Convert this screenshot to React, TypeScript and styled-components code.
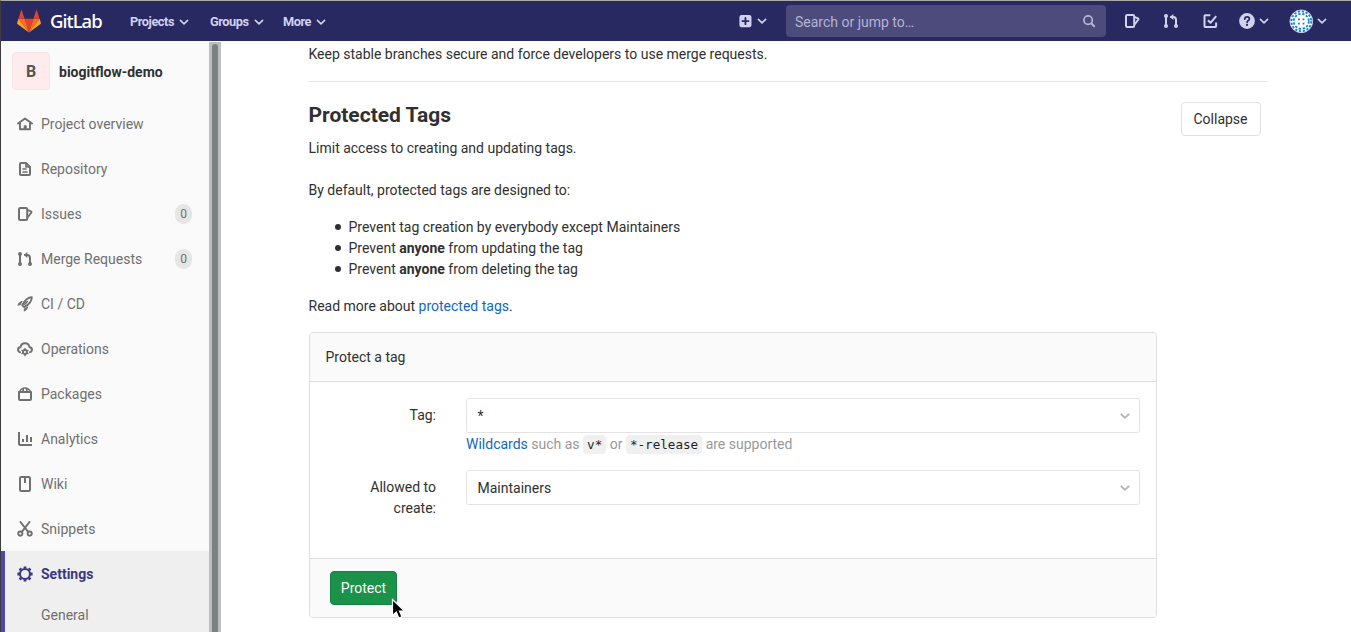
import React from "react";
import styled, { createGlobalStyle } from "styled-components";

const GlobalStyle = createGlobalStyle`
  * { box-sizing: border-box; }
  html, body { margin: 0; padding: 0; height: 632px; overflow: hidden; }
  body { background: #fff; color: #303030; font: 14px/21px Roboto, "Noto Sans", sans-serif; }
  p, h1, h4, ul { margin: 0; padding: 0; }
  svg { display: block; flex: none; }
`;

const Window = styled.div`
  width: 1351px;
  height: 632px;
  display: flex;
  flex-direction: column;
  overflow: hidden;
  border-top: 1px solid #a9aaa8;
  border-left: 1px solid #3c3b3f;
`;

const Navbar = styled.header`
  flex: none;
  height: 40px;
  display: flex;
  align-items: center;
  background: #292961;
  color: #d1d1f0;
  padding-left: 16px;
`;

const Brand = styled.a`
  display: flex;
  align-items: center;
  width: 113px;
  color: #fff;
`;

const Wordmark = styled.span`
  margin-left: 9px;
  font: 500 18.5px/24px "Noto Sans", "Open Sans", sans-serif;
  letter-spacing: -0.95px;
`;

const NavLink = styled.a<{ $width: number }>`
  display: flex;
  align-items: center;
  gap: 5px;
  width: ${(p) => p.$width}px;
  padding-top: 1px;
  font-weight: 700;
  font-size: 12.75px;
  letter-spacing: -0.45px;
`;

const NavSpacer = styled.div`
  flex: 1;
`;

const NavTool = styled.a<{ $width: number; $gap?: number }>`
  flex: none;
  display: flex;
  align-items: center;
  gap: ${(p) => p.$gap ?? 0}px;
  width: ${(p) => p.$width}px;
`;

const Search = styled.div`
  width: 320px;
  height: 32px;
  margin-right: 18px;
  padding: 0 10px 0 9px;
  display: flex;
  align-items: center;
  justify-content: space-between;
  border-radius: 4px;
  background: #4c4b7c;
  color: #b4b4d6;
`;

const SearchText = styled.span`
  padding-top: 2px;
`;

const Body = styled.div`
  flex: 1;
  min-height: 0;
  display: flex;
`;

const Sidebar = styled.nav`
  flex: none;
  width: 208px;
  background: #fafafa;
  color: #707070;
  overflow: hidden;
`;

const Scrollbar = styled.div`
  flex: none;
  width: 12px;
  margin-top: 1px;
  padding: 2px 3px 0;
  background: #bcbfbe;
`;

const Thumb = styled.div`
  height: 620px;
  border-radius: 3px;
  background: #7b8180;
`;

const Project = styled.div`
  height: 60px;
  padding: 0 0 0 11px;
  display: flex;
  align-items: center;
  gap: 9px;
  color: #303030;
  font-weight: 700;
`;

const ProjectAvatar = styled.span`
  width: 38px;
  height: 38px;
  display: flex;
  align-items: center;
  justify-content: center;
  border-radius: 4px;
  border: 1px solid #f8e6e7;
  background: #ffebee;
  color: #555;
  font-size: 16px;
`;

const ProjectName = styled.span`
  padding-top: 2px;
`;

const SideItem = styled.a<{ $active?: boolean }>`
  height: 45px;
  padding: 1px 17px 0 16px;
  display: flex;
  align-items: center;
  gap: 8px;
  font-weight: ${(p) => (p.$active ? 700 : 400)};
  color: ${(p) => (p.$active ? "#393982" : "inherit")};
`;

const SideLabel = styled.span`
  flex: 1;
`;

const Count = styled.span`
  width: 17px;
  height: 20px;
  border-radius: 9px;
  background: #e6e6e6;
  text-align: center;
  font-size: 12px;
  line-height: 20px;
`;

const ActiveGroup = styled.div`
  height: 90px;
  background: #efefef;
  box-shadow: inset 4px 0 0 #4b4ba3;
`;

const SubItem = styled.a`
  display: block;
  padding: 9px 0 0 40px;
`;

const Main = styled.main`
  flex: 1;
  padding: 3px 84px 0 87.5px;
`;

const Intro = styled.p`
  height: 38px;
  border-bottom: 1px solid #e1e1e1;
`;

const SectionHead = styled.div`
  height: 93px;
  padding: 20px 6px 0 0;
  display: flex;
  justify-content: space-between;
  align-items: flex-start;
`;

const Title = styled.h4`
  margin-bottom: 10px;
  font-size: 21px;
  line-height: 26px;
  font-weight: 700;
`;

const Button = styled.button<{ $primary?: boolean }>`
  width: ${(p) => (p.$primary ? 67 : 80)}px;
  height: 34px;
  padding: ${(p) => (p.$primary ? "0" : "0 1px 0 0")};
  border-radius: 4px;
  border: 1px solid ${(p) => (p.$primary ? "#168044" : "#e1e1e1")};
  background: ${(p) => (p.$primary ? "#1a9249" : "#fff")};
  color: ${(p) => (p.$primary ? "#fff" : "#303030")};
  font: inherit;
`;

const Paragraph = styled.p`
  margin: 5px 0 16px;
`;

const Bullets = styled.ul`
  margin-bottom: 16px;
  list-style: none;
`;

const Bullet = styled.li`
  display: flex;
  align-items: center;
  padding-left: 26.5px;

  &::before {
    content: "";
    width: 6px;
    height: 6px;
    margin: 0 7.5px 1px 0;
    border-radius: 50%;
    background: #303030;
  }
`;

const Link = styled.a`
  color: #1068bf;
`;

const Card = styled.form`
  width: 848px;
  height: 286px;
  margin: 15px 0 0 0.5px;
  display: flex;
  flex-direction: column;
  border: 1px solid #dedede;
  border-radius: 4px;
  overflow: hidden;
`;

const CardHeader = styled.div`
  height: 49px;
  padding: 14px 15.5px;
  background: #fafafa;
  border-bottom: 1px solid #dedede;
`;

const CardBody = styled.div`
  flex: 1;
  padding: 16px 16px 0 0;
`;

const CardFooter = styled.div`
  height: 59px;
  padding: 12px 20px;
  background: #fafafa;
  border-top: 1px solid #dedede;
`;

const FormRow = styled.div`
  display: grid;
  grid-template-columns: 126px 674px;
  column-gap: 30px;
  height: 72px;
`;

const Label = styled.label`
  padding: 7px 0 0 30px;
  text-align: right;
`;

const Select = styled.div`
  height: 35px;
  padding: 0 9px 0 10.5px;
  display: flex;
  align-items: center;
  justify-content: space-between;
  border: 1px solid #e3e3e3;
  border-radius: 3px;
  color: #303030;
`;

const SelectValue = styled.span`
  padding-top: 2px;
`;

const Hint = styled.p`
  padding-top: 1px;
  color: #999;
  white-space: nowrap;
`;

const Code = styled.code`
  padding: 2px 4px;
  border-radius: 4px;
  background: #f0f0f0;
  color: #1f1f1f;
  font: 12.6px/15px "DejaVu Sans Mono", monospace;
`;

const Pointer = styled.svg`
  position: absolute;
  left: 391px;
  top: 598px;
`;

const Chevron = ({ size = 10, color = "currentColor", width = 1.6 }) => (
  <svg width={size} height={size} viewBox="0 0 10 10" fill="none" stroke={color} strokeWidth={width} strokeLinecap="round" strokeLinejoin="round">
    <path d="M1.4 3.4 5 6.8l3.6-3.4" />
  </svg>
);

type IconName =
  | "home" | "doc" | "issues" | "merge" | "rocket" | "cloud" | "package"
  | "chart" | "book" | "scissors" | "gear" | "plus" | "todo" | "help" | "search";

const shapes: Record<IconName, React.ReactNode> = {
  home: <path d="M1 7.4 8 2.4l7 5M3 7v6.2h10V7M7.6 13V10.2h1.2V13" strokeWidth="1.9" />,
  doc: (
    <>
      <path d="M4 2h5l4 4v7a1 1 0 0 1-1 1H4a1 1 0 0 1-1-1V3a1 1 0 0 1 1-1Z" />
      <path d="M6 8H9M6 11h4M9 2.5V6h3.5" strokeWidth="1.7" />
    </>
  ),
  issues: (
    <>
      <rect x="2" y="2" width="8.2" height="12" rx="1.2" />
      <path d="M11 4.2l3 1.2c.5.2.6.6.4 1L11 11" strokeWidth="1.9" />
    </>
  ),
  merge: (
    <>
      <path d="M3 3v10M8 4h2.2C12 4 13 5 13 6.8V13" />
      <path d="M10.4.9v6.2L6.8 4Z" fill="currentColor" stroke="none" />
      <g fill="currentColor" stroke="none">
        <circle cx="3" cy="3" r="2" /><circle cx="3" cy="13" r="2" /><circle cx="13" cy="13" r="2" />
      </g>
    </>
  ),
  rocket: (
    <>
      <path d="M14.8 1.2C10.5 1.2 8 3.7 5.2 9.2l1.9 1.9c5.1-2.6 7.7-5.5 7.7-9.9Z" strokeWidth="1.9" />
      <path d="M10.3 5.6 7.7 8.3" strokeWidth="1.6" />
      <path d="M4.7 5C2.5 5.6 1 7.2.3 9.7l3-.5L5.8 5ZM6.8 12.7l4.4-2.4c-.2 2.3-1.8 4.5-4.4 5.4Z" fill="currentColor" stroke="none" />
    </>
  ),
  cloud: (
    <>
      <path d="M3 11.2C1.7 10.8 1 10 1 8.8c0-1.6 1.1-2.5 2.5-2.6C3.9 3.8 5.7 2.3 8 2.3s4.1 1.5 4.5 3.9c1.4.1 2.5 1 2.5 2.6 0 1.2-.7 2-2 2.4" />
      <circle cx="8" cy="11" r="2" strokeWidth="1.8" />
      <path d="M8 7.4v1.4M8 13.2v1.6M5 9.3l1.2.7M9.8 12l1.2.7M5 12.7l1.2-.7M9.8 10l1.2-.7" strokeWidth="1.4" />
    </>
  ),
  package: (
    <>
      <path d="M2 6h12v7a1 1 0 0 1-1 1H3a1 1 0 0 1-1-1Z" />
      <path d="M2.5 6C3.8 2.8 5 2 8 2s4.2.8 5.5 4M6.2 2.3v3.2M9.8 2.3v3.2" strokeWidth="1.7" />
    </>
  ),
  chart: <path d="M2 1v11.5c0 1 .5 1.5 1.5 1.5H15M6 8v3M10 4v7M14 6v5" strokeWidth="2" strokeLinecap="butt" />,
  book: (
    <>
      <rect x="3" y="1" width="10" height="14" rx="1.3" />
      <path d="M8 2v5" strokeWidth="2" strokeLinecap="butt" />
    </>
  ),
  scissors: (
    <>
      <circle cx="3.3" cy="12.6" r="2.1" strokeWidth="1.9" />
      <circle cx="12.7" cy="12.6" r="2.1" strokeWidth="1.9" />
      <path d="M3.5 1l7.7 9.8M12.5 1l-7.7 9.8" />
    </>
  ),
  gear: (
    <>
      <circle cx="8" cy="8" r="5" strokeWidth="2.1" />
      <path d="M8 .4v2.1M8 13.5v2.1M.4 8h2.1M13.5 8h2.1M2.6 2.6l1.5 1.5M11.9 11.9l1.5 1.5M2.6 13.4l1.5-1.5M11.9 4.1l1.5-1.5" strokeWidth="2.8" strokeLinecap="butt" />
    </>
  ),
  plus: (
    <>
      <rect x="1.6" y="1.2" width="13.8" height="13.8" rx="2.5" fill="currentColor" stroke="none" />
      <path d="M8.5 4.6v7M5 8.1h7" stroke="#292961" strokeWidth="2.1" />
    </>
  ),
  todo: <path d="M7.3 2.3H2.3c-.5 0-.8.3-.8.8v10.1c0 .5.3.8.8.8h10c.5 0 .8-.3.8-.8V9.4M4.9 7.2l2.6 2.6 5.7-6.6" strokeLinecap="butt" />,
  help: (
    <>
      <circle cx="8" cy="8" r="7.9" fill="currentColor" stroke="none" />
      <path d="M5.8 6.1c0-1.4.9-2.2 2.3-2.2s2.3.8 2.3 2c0 1.6-2.3 1.7-2.3 3.4" stroke="#292961" strokeWidth="1.7" />
      <circle cx="8" cy="11.9" r="1.1" fill="#292961" stroke="none" />
    </>
  ),
  search: (
    <>
      <circle cx="7" cy="7" r="4.8" />
      <path d="m10.8 10.8 3.1 3.1" strokeWidth="2.4" />
    </>
  ),
};

const Icon = ({ name, size = 16 }: { name: IconName; size?: number }) => (
  <svg width={size} height={size} viewBox="0 0 16 16" fill="none" stroke="currentColor" strokeWidth="2" strokeLinecap="round" strokeLinejoin="round">
    {shapes[name]}
  </svg>
);

const Tanuki = () => (
  <svg width="24" height="23" viewBox="0 0 24 23">
    <path d="M12 22.4 16.4 8.8H7.6Z" fill="#e24329" />
    <path d="M12 22.4 7.6 8.8H1.4Z" fill="#fc6d26" />
    <path d="M1.4 8.8.1 12.9c-.1.4 0 .8.3 1L12 22.4Z" fill="#fca326" />
    <path d="M1.4 8.8h6.2L4.9.6c-.1-.4-.7-.4-.8 0Z" fill="#e24329" />
    <path d="M12 22.4 16.4 8.8h6.2Z" fill="#fc6d26" />
    <path d="m22.6 8.8 1.3 4.1c.1.4 0 .8-.3 1L12 22.4Z" fill="#fca326" />
    <path d="M22.6 8.8h-6.2L19.1.6c.1-.4.7-.4.8 0Z" fill="#e24329" />
  </svg>
);

const UserAvatar = () => (
  <svg width="24" height="24" viewBox="0 0 24 24">
    <circle cx="12.3" cy="12.3" r="11.4" fill="#fff" stroke="#c9cbea" strokeWidth=".8" />
    <g fill="none" stroke="#0f80dc" strokeWidth="1.8">
      <circle cx="12.3" cy="12.3" r="9.9" strokeDasharray="2.3 1.6" />
      <circle cx="12.3" cy="12.3" r="7.5" strokeDasharray="2.4 1.6" />
      <path d="M9 10.4h1.8M13.6 10.4h1.8M9 14.6h1.8M13.6 14.6h1.8" />
    </g>
  </svg>
);

const items: { icon: IconName; label: string; count?: number }[] = [
  { icon: "home", label: "Project overview" },
  { icon: "doc", label: "Repository" },
  { icon: "issues", label: "Issues", count: 0 },
  { icon: "merge", label: "Merge Requests", count: 0 },
  { icon: "rocket", label: "CI / CD" },
  { icon: "cloud", label: "Operations" },
  { icon: "package", label: "Packages" },
  { icon: "chart", label: "Analytics" },
  { icon: "book", label: "Wiki" },
  { icon: "scissors", label: "Snippets" },
];

export default function App() {
  return (
    <Window>
      <GlobalStyle />
      <Navbar>
        <Brand><Tanuki /><Wordmark>GitLab</Wordmark></Brand>
        <NavLink $width={80}>Projects<Chevron /></NavLink>
        <NavLink $width={73}>Groups<Chevron /></NavLink>
        <NavLink $width={60}>More<Chevron /></NavLink>
        <NavSpacer />
        <NavTool $width={48} $gap={5}><Icon name="plus" size={14} /><Chevron /></NavTool>
        <Search><SearchText>Search or jump to…</SearchText><Icon name="search" size={14} /></Search>
        <NavTool $width={39}><Icon name="issues" /></NavTool>
        <NavTool $width={40}><Icon name="merge" /></NavTool>
        <NavTool $width={36}><Icon name="todo" /></NavTool>
        <NavTool $width={50} $gap={4}><Icon name="help" /><Chevron /></NavTool>
        <NavTool $width={62} $gap={4}><UserAvatar /><Chevron /></NavTool>
      </Navbar>
      <Body>
        <Sidebar>
          <Project>
            <ProjectAvatar>B</ProjectAvatar>
            <ProjectName>biogitflow-demo</ProjectName>
          </Project>
          {items.map((item) => (
            <SideItem key={item.label}>
              <Icon name={item.icon} />
              <SideLabel>{item.label}</SideLabel>
              {item.count !== undefined && <Count>{item.count}</Count>}
            </SideItem>
          ))}
          <ActiveGroup>
            <SideItem $active><Icon name="gear" /><SideLabel>Settings</SideLabel></SideItem>
            <SubItem>General</SubItem>
          </ActiveGroup>
        </Sidebar>
        <Scrollbar><Thumb /></Scrollbar>
        <Main>
          <Intro>Keep stable branches secure and force developers to use merge requests.</Intro>
          <SectionHead>
            <div>
              <Title>Protected Tags</Title>
              <p>Limit access to creating and updating tags.</p>
            </div>
            <Button type="button">Collapse</Button>
          </SectionHead>
          <Paragraph>By default, protected tags are designed to:</Paragraph>
          <Bullets>
            <Bullet><span>Prevent tag creation by everybody except Maintainers</span></Bullet>
            <Bullet><span>Prevent <b>anyone</b> from updating the tag</span></Bullet>
            <Bullet><span>Prevent <b>anyone</b> from deleting the tag</span></Bullet>
          </Bullets>
          <p>Read more about <Link>protected tags</Link>.</p>
          <Card>
            <CardHeader>Protect a tag</CardHeader>
            <CardBody>
              <FormRow>
                <Label>Tag:</Label>
                <div>
                  <Select><SelectValue>*</SelectValue><Chevron color="#bababa" width={2} /></Select>
                  <Hint><Link>Wildcards</Link> such as <Code>v*</Code> or <Code>*-release</Code> are supported</Hint>
                </div>
              </FormRow>
              <FormRow>
                <Label>Allowed to create:</Label>
                <Select><SelectValue>Maintainers</SelectValue><Chevron color="#bababa" width={2} /></Select>
              </FormRow>
            </CardBody>
            <CardFooter><Button type="button" $primary>Protect</Button></CardFooter>
          </Card>
        </Main>
      </Body>
      <Pointer width="16" height="22" viewBox="0 0 16 22">
        <path d="M1.5 1.5v16l3.8-3.4 2.5 6 3.2-1.4-2.5-5.6h5Z" fill="#000" stroke="#fff" strokeWidth="1.2" />
      </Pointer>
    </Window>
  );
}
